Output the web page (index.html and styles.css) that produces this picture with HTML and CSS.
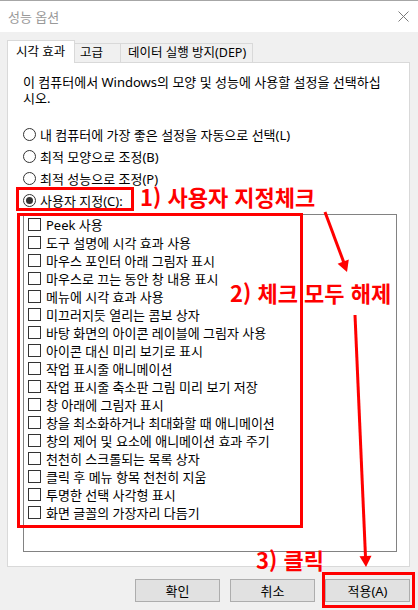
FILE: index.html
```html
<!DOCTYPE html>
<html lang="ko">
<head>
    <meta charset="UTF-8">
    <meta name="viewport" content="width=device-width, initial-scale=1.0">
    <title>성능 옵션</title>
    <link rel="stylesheet" href="styles.css">
</head>
<body>
    <div class="dialog">
        <div class="titlebar">
            <span class="title">성능 옵션</span>
            <svg class="close" width="11" height="11" viewBox="0 0 11 11">
                <path d="M0.5 0.5 L10.5 10.5 M10.5 0.5 L0.5 10.5" stroke="#7a7a7a" stroke-width="1" fill="none"/>
            </svg>
        </div>

        <div class="content">
            <div class="tabs">
                <div class="tab active">시각 효과</div>
                <div class="tab tab-advanced">고급</div>
                <div class="tab tab-dep">데이터 실행 방지(DEP)</div>
            </div>

            <div class="panel">
                <p class="desc">이 컴퓨터에서 Windows의 모양 및 성능에 사용할 설정을 선택하십시오.</p>

                <div class="radios">
                    <div class="radio"><span class="circle"></span>내 컴퓨터에 가장 좋은 설정을 자동으로 선택(L)</div>
                    <div class="radio"><span class="circle"></span>최적 모양으로 조정(B)</div>
                    <div class="radio"><span class="circle"></span>최적 성능으로 조정(P)</div>
                    <div class="radio"><span class="circle on"></span>사용자 지정(C):</div>
                </div>

                <div class="listbox">
                    <div class="item"><span class="box"></span>Peek 사용</div>
                    <div class="item"><span class="box"></span>도구 설명에 시각 효과 사용</div>
                    <div class="item"><span class="box"></span>마우스 포인터 아래 그림자 표시</div>
                    <div class="item"><span class="box"></span>마우스로 끄는 동안 창 내용 표시</div>
                    <div class="item"><span class="box"></span>메뉴에 시각 효과 사용</div>
                    <div class="item"><span class="box"></span>미끄러지듯 열리는 콤보 상자</div>
                    <div class="item"><span class="box"></span>바탕 화면의 아이콘 레이블에 그림자 사용</div>
                    <div class="item"><span class="box"></span>아이콘 대신 미리 보기로 표시</div>
                    <div class="item"><span class="box"></span>작업 표시줄 애니메이션</div>
                    <div class="item"><span class="box"></span>작업 표시줄 축소판 그림 미리 보기 저장</div>
                    <div class="item"><span class="box"></span>창 아래에 그림자 표시</div>
                    <div class="item"><span class="box"></span>창을 최소화하거나 최대화할 때 애니메이션</div>
                    <div class="item"><span class="box"></span>창의 제어 및 요소에 애니메이션 효과 주기</div>
                    <div class="item"><span class="box"></span>천천히 스크롤되는 목록 상자</div>
                    <div class="item"><span class="box"></span>클릭 후 메뉴 항목 천천히 지움</div>
                    <div class="item"><span class="box"></span>투명한 선택 사각형 표시</div>
                    <div class="item"><span class="box"></span>화면 글꼴의 가장자리 다듬기</div>
                </div>
            </div>

            <div class="buttons">
                <div class="btn">확인</div>
                <div class="btn">취소</div>
                <div class="btn">적용(A)</div>
            </div>
        </div>

        <!-- annotations drawn over the dialog -->
        <div class="mark mark-custom"></div>
        <div class="mark mark-list"></div>
        <div class="mark mark-apply"></div>

        <div class="note note-1">1) 사용자 지정체크</div>
        <div class="note note-2">2) 체크 모두 해제</div>
        <div class="note note-3">3) 클릭</div>

        <svg class="arrows" width="418" height="610" viewBox="0 0 418 610">
            <line x1="325" y1="212" x2="344" y2="263" stroke="#ff0000" stroke-width="3"/>
            <polygon points="347,272 337.6,263.8 348.8,259.6" fill="#ff0000"/>
            <line x1="355" y1="315" x2="365.5" y2="557" stroke="#ff0000" stroke-width="3"/>
            <polygon points="366,567 359.5,556.3 371.5,555.7" fill="#ff0000"/>
        </svg>
    </div>
</body>
</html>
```

FILE: styles.css
```css
body {
    margin: 0;
    background-color: #f0f0f0;
    font-family: "Noto Sans", "Noto Sans CJK KR", sans-serif;
    font-size: 13px;
    color: #000;
}

.dialog {
    position: relative;
    width: 418px;
    height: 610px;
    overflow: hidden;
}

/* title bar */
.titlebar {
    height: 30px;
    background-color: #fff;
    border-top: 1px solid #a6a6a6;
    display: flex;
    align-items: center;
    justify-content: space-between;
    padding: 0 9px 1px 8px;
    box-sizing: content-box;
}

.title {
    color: #999;
}

.content {
    padding: 8px 8px 0 7px;
}

/* tabs */
.tabs {
    display: flex;
    align-items: flex-end;
    height: 23px;
    position: relative;
    z-index: 1;
    font-size: 12.5px;
}

.tab {
    box-sizing: border-box;
    height: 19px;
    margin-bottom: 1px;
    margin-left: -1px;
    border: 1px solid #d9d9d9;
    border-bottom: none;
    background-color: #f0f0f0;
    line-height: 18px;
    padding-left: 8px;
    white-space: nowrap;
}

.tab.active {
    width: 68px;
    height: 23px;
    margin: 0;
    background-color: #fff;
    line-height: 21px;
}

.tab-advanced {
    width: 47px;
    padding-left: 5px;
}

.tab-dep {
    width: 133px;
    padding-left: 7px;
}

/* panel */
.panel {
    margin-top: -1px;
    background-color: #fff;
    border: 1px solid #d9d9d9;
    padding: 11px 0 14px 15px;
}

.desc {
    margin: 0;
    width: 363px;
    line-height: 16px;
}

.radios {
    margin-top: 17px;
}

.radio {
    display: flex;
    align-items: center;
    height: 22px;
}

.circle {
    box-sizing: border-box;
    width: 13px;
    height: 13px;
    border: 1px solid #333;
    border-radius: 50%;
    margin-right: 4px;
    display: flex;
    align-items: center;
    justify-content: center;
}

.circle.on::after {
    content: "";
    width: 7px;
    height: 7px;
    border-radius: 50%;
    background-color: #333;
}

.listbox {
    box-sizing: border-box;
    margin-top: 3px;
    width: 374px;
    height: 338px;
    border: 1px solid #828282;
    overflow: hidden;
}

.item {
    display: flex;
    align-items: center;
    height: 18px;
    padding-left: 4px;
    white-space: nowrap;
}

.box {
    box-sizing: border-box;
    width: 13px;
    height: 13px;
    border: 1px solid #333;
    margin-right: 5px;
    flex-shrink: 0;
}

/* buttons */
.buttons {
    display: flex;
    justify-content: flex-end;
    gap: 10px;
    margin-top: 12px;
}

.btn {
    box-sizing: border-box;
    width: 85px;
    height: 23px;
    border: 1px solid #adadad;
    background-color: #e1e1e1;
    display: flex;
    align-items: center;
    justify-content: center;
}

/* red annotations */
.mark {
    position: absolute;
    box-sizing: border-box;
    border: 3px solid #ff0000;
}

.mark-custom {
    left: 16px;
    top: 187px;
    width: 118px;
    height: 24px;
}

.mark-list {
    left: 17px;
    top: 213px;
    width: 286px;
    height: 315px;
}

.mark-apply {
    left: 322px;
    top: 572px;
    width: 93px;
    height: 36px;
}

.note {
    position: absolute;
    color: #ff0000;
    font-family: "Noto Sans CJK KR", sans-serif;
    font-weight: bold;
    font-size: 22px;
    line-height: 1;
    white-space: nowrap;
}

.note-1 {
    left: 140px;
    top: 185px;
}

.note-2 {
    left: 230px;
    top: 281px;
}

.note-3 {
    left: 256px;
    top: 548px;
}

.arrows {
    position: absolute;
    left: 0;
    top: 0;
    pointer-events: none;
}
```
